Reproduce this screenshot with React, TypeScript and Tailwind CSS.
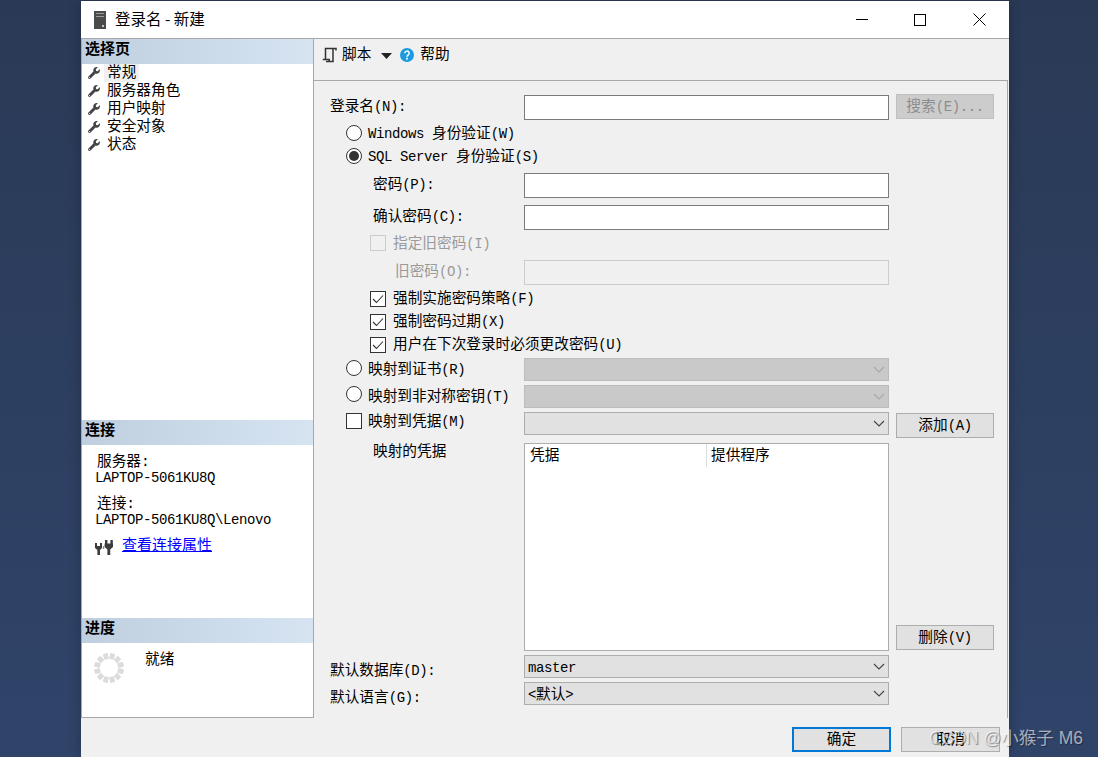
import type { ReactNode } from 'react'
import { FaWrench } from 'react-icons/fa'

// latin runs sit in a narrower span so they come out 8px per character
function Txt({ s }: { s: string }) {
  const parts = s.split(/([\x20-\x7e]+)/).filter(Boolean)
  return (
    <>
      {parts.map((p, i) =>
        /^[\x20-\x7e]+$/.test(p) ? (
          <span key={i} className="whitespace-pre text-[14px] tracking-[-0.4px]">
            {p}
          </span>
        ) : (
          <span key={i}>{p}</span>
        ),
      )}
    </>
  )
}

function SectionHeader({ title }: { title: string }) {
  return (
    <div className="flex h-[25px] shrink-0 items-center bg-gradient-to-r from-[#bfcfdf] to-[#d6e4f2] pb-px pl-[3px] text-[15px] font-bold leading-[18px] text-black">
      {title}
    </div>
  )
}

function Radio({ checked, className = '' }: { checked?: boolean; className?: string }) {
  return (
    <span className={`flex h-4 w-4 shrink-0 items-center justify-center rounded-full border border-[#333] bg-white ${className}`}>
      {checked && <span className="h-[10px] w-[10px] rounded-full bg-[#333]" />}
    </span>
  )
}

function Checkbox({ checked, disabled }: { checked?: boolean; disabled?: boolean }) {
  return (
    <span
      className={`flex h-4 w-4 shrink-0 items-center justify-center border ${
        disabled ? 'border-[#ccc] bg-[#f0f0f0]' : 'border-[#333] bg-white'
      }`}
    >
      {checked && (
        <svg width="12" height="10" viewBox="0 0 12 10" fill="none" stroke="#333" strokeWidth="1.1">
          <path d="M1 5l3.5 3.5L11 1.5" />
        </svg>
      )}
    </span>
  )
}

function Chevron({ disabled }: { disabled?: boolean }) {
  return (
    <svg width="12" height="7" viewBox="0 0 12 7" fill="none" stroke={disabled ? '#a8a8a8' : '#444'} strokeWidth="1.1">
      <path d="M1 1l5 5 5-5" />
    </svg>
  )
}

function Combo({ value, disabled }: { value?: string; disabled?: boolean }) {
  return (
    <div
      className={`flex h-[23px] w-[365px] items-center justify-between border pl-[3px] pr-[3px] ${
        disabled ? 'border-[#bcbcbc] bg-[#c9c9c9]' : 'border-[#adadad] bg-[#e1e1e1]'
      }`}
    >
      <span className="pt-[2px] leading-[18px]">{value && <Txt s={value} />}</span>
      <Chevron disabled={disabled} />
    </div>
  )
}

function TextInput({ disabled }: { disabled?: boolean }) {
  return (
    <div
      className={`h-[25px] w-[365px] border ${
        disabled ? 'border-[#cccccc] bg-[#f0f0f0]' : 'border-[#7a7a7a] bg-white'
      }`}
    />
  )
}

function Button({ label, disabled }: { label: string; disabled?: boolean }) {
  return (
    <div
      className={`ml-[7px] flex h-[25px] w-[98px] items-center justify-center border pt-px leading-[18px] ${
        disabled ? 'border-[#bfbfbf] bg-[#cccccc] text-[#8c8c8c]' : 'border-[#adadad] bg-[#e1e1e1]'
      }`}
    >
      <Txt s={label} />
    </div>
  )
}

// one row of the form: left cell up to x=524, then the field and optional button
function Row({ left, children, className = '' }: { left: ReactNode; children?: ReactNode; className?: string }) {
  return (
    <div className={`flex items-center ${className}`}>
      <div className="flex w-[194px] shrink-0 items-center leading-[18px]">{left}</div>
      {children}
    </div>
  )
}

function ServerIcon() {
  return (
    <svg width="14" height="18" viewBox="0 0 14 18">
      <rect x="1" y="0" width="12" height="18" fill="#4a4a4a" />
      <rect x="3" y="2" width="8" height="1" fill="#9a9a9a" />
      <rect x="3" y="5" width="8" height="1" fill="#9a9a9a" />
      <rect x="9" y="14" width="2" height="2" fill="#c8c8c8" />
    </svg>
  )
}

function ScriptIcon() {
  return (
    <svg width="15" height="16" viewBox="0 0 15 16" fill="none" stroke="#333" strokeWidth="1.5">
      <path d="M14 3.5V1.5H3.5V12.5" />
      <path d="M11 1.5V14.5H4" />
      <path d="M.8 12.5H7.2V14.5" />
    </svg>
  )
}

function PlugsIcon() {
  return (
    <svg width="18" height="15" viewBox="0 0 18 15" fill="#3c3c3c">
      <rect x="0" y="3" width="2" height="4" />
      <rect x="5" y="3" width="2" height="4" />
      <path d="M0 6h7v2L5 10v5H2.4v-5L0 8z" />
      <rect x="10" y="0" width="2.4" height="4" />
      <rect x="15.4" y="0" width="2.4" height="4" />
      <path d="M9.6 3.5h8.4v3.5l-2.8 2.5V15h-2.8V9.5L9.6 7z" />
      <rect x="7.8" y="6" width="1.4" height="3" fill="#8a8a8a" />
    </svg>
  )
}

function Spinner() {
  const dots = Array.from({ length: 12 }, (_, i) => i * 30 + 15)
  return (
    <svg width="32" height="32" viewBox="0 0 32 32">
      {dots.map((a) => (
        <rect key={a} x="13.5" y="1" width="5" height="6" rx="1" fill="#dcdcdc" transform={`rotate(${a} 16 16)`} />
      ))}
    </svg>
  )
}

const pages = ['常规', '服务器角色', '用户映射', '安全对象', '状态']

export default function App() {
  return (
    <div className="relative h-[757px] w-[1098px] overflow-hidden bg-gradient-to-b from-[#2a3a56] to-[#30446a] pl-[81px] pt-px font-['Liberation_Mono','Noto_Sans_CJK_SC',monospace] text-[14.67px] text-black">
      <div className="flex h-[756px] w-[928px] flex-col bg-[#f0f0f0] shadow-[0_0_12px_rgba(0,0,0,0.25)]">
        {/* title bar */}
        <div className="flex h-[38px] shrink-0 items-center border-b border-[#a8a8a8] bg-white pl-[12px] pr-px">
          <ServerIcon />
          <span className="ml-[8px] -translate-y-px font-['Noto_Sans_CJK_SC',sans-serif] text-[15.5px]">登录名 - 新建</span>
          <div className="ml-auto flex">
            <div className="flex h-[36px] w-[58px] items-center justify-center pr-[2px]">
              <span className="h-px w-3 bg-black" />
            </div>
            <div className="flex h-[36px] w-[58px] items-center justify-center pr-[2px]">
              <span className="h-[12px] w-[12px] border border-black" />
            </div>
            <div className="flex h-[36px] w-[58px] items-center justify-center">
              <svg width="13" height="13" viewBox="0 0 13 13" stroke="#000" strokeWidth="1">
                <path d="M.5.5l12 12M12.5.5l-12 12" />
              </svg>
            </div>
          </div>
        </div>

        <div className="flex min-h-0 flex-1">
          {/* left column */}
          <div className="h-[679px] w-[233px] shrink-0 border-x border-b border-[#a8a8a8] bg-white">
            <SectionHeader title="选择页" />
            <div className="h-[356px]">
              {pages.map((p, i) => (
                <div key={p} className="flex h-[18px] items-center pl-[6px] leading-[18px]">
                  <FaWrench className="h-3 w-3 text-[#444]" />
                  <span className={`ml-[4px] px-[3px] ${i === 0 ? 'bg-[#f0f0f0]' : ''}`}>{p}</span>
                </div>
              ))}
            </div>

            <SectionHeader title="连接" />
            <div className="h-[173px] pl-[13px] pt-[9px] leading-[18px]">
              <div className="h-[15px] -translate-y-px pl-[2px]">服务器:</div>
              <div className="h-[17px]">
                <Txt s="LAPTOP-5061KU8Q" />
              </div>
              <div className="mt-[10px] h-[15px] -translate-y-px pl-[2px]">连接:</div>
              <div className="h-[17px]">
                <Txt s="LAPTOP-5061KU8Q\Lenovo" />
              </div>
              <div className="mt-[10px] flex items-center">
                <PlugsIcon />
                <a className="ml-[9px] text-[15px] text-[#0000ff] underline">查看连接属性</a>
              </div>
            </div>

            <SectionHeader title="进度" />
            <div className="flex pl-[11px] pt-[9px]">
              <Spinner />
              <span className="ml-[20px] -mt-px leading-[18px]">就绪</span>
            </div>
          </div>

          {/* right column */}
          <div className="flex min-w-0 flex-1 flex-col">
            <div className="flex h-[41px] shrink-0 items-start pl-[8px] pt-[8px] leading-[18px]">
              <ScriptIcon />
              <span className="ml-[5px] -translate-y-px">脚本</span>
              <svg className="ml-[10px] mt-[6px]" width="11" height="6" viewBox="0 0 11 6" fill="#222">
                <path d="M0 0h11L5.5 6z" />
              </svg>
              <svg className="ml-[8px] mt-px" width="14" height="14" viewBox="0 0 14 14">
                <circle cx="7" cy="7" r="7" fill="#1c9ae0" />
                <path d="M4.8 5.3a2.2 2.2 0 1 1 3.3 1.9c-.8.5-1.1.8-1.1 1.6" fill="none" stroke="#fff" strokeWidth="1.5" />
                <rect x="6.1" y="9.8" width="1.8" height="1.8" fill="#fff" />
              </svg>
              <span className="ml-[6px] -translate-y-px">帮助</span>
            </div>

            {/* form */}
            <div className="mr-[1px] h-[638px] border-r border-t border-[#a8a8a8] pl-[16px] pt-[13px]">
              <Row left={<Txt s="登录名(N):" />} className="h-[26px]">
                <div className="mt-px">
                  <TextInput />
                </div>
                <div className="-mt-px">
                  <Button label="搜索(E)..." disabled />
                </div>
              </Row>
              <div className="mt-[2px]" />
              <Row
                className="h-[23px]"
                left={
                  <span className="flex items-center pl-4">
                    <Radio className="-translate-y-px" />
                    <span className="ml-[6px]">
                      <Txt s="Windows 身份验证(W)" />
                    </span>
                  </span>
                }
              />
              <Row
                className="h-[23px]"
                left={
                  <span className="flex items-center whitespace-nowrap pl-4">
                    <Radio checked className="-translate-y-px" />
                    <span className="ml-[6px]">
                      <Txt s="SQL Server 身份验证(S)" />
                    </span>
                  </span>
                }
              />
              <Row className="mt-[5px] h-[25px]" left={<span className="-translate-y-px pl-[43px]"><Txt s="密码(P):" /></span>}>
                <TextInput />
              </Row>
              <Row className="mt-[7px] h-[25px]" left={<span className="-translate-y-px pl-[43px]"><Txt s="确认密码(C):" /></span>}>
                <TextInput />
              </Row>
              <Row
                className="mt-[2px] h-[22px]"
                left={
                  <span className="flex items-center pl-[40px] text-[#9a9a9a]">
                    <Checkbox disabled />
                    <span className="ml-[7px] translate-y-px">
                      <Txt s="指定旧密码(I)" />
                    </span>
                  </span>
                }
              />
              <Row className="mt-[6px] h-[25px]" left={<span className="-translate-y-px pl-[65px] text-[#9a9a9a]"><Txt s="旧密码(O):" /></span>}>
                <TextInput disabled />
              </Row>
              <div className="mt-[2px]">
                {['强制实施密码策略(F)', '强制密码过期(X)', '用户在下次登录时必须更改密码(U)'].map((t) => (
                  <Row
                    key={t}
                    className="h-[23px]"
                    left={
                      <span className="flex items-center whitespace-nowrap pl-[40px]">
                        <Checkbox checked />
                        <span className="ml-[7px]">
                          <Txt s={t} />
                        </span>
                      </span>
                    }
                  />
                ))}
              </div>
              <Row
                className="mt-[2px] h-[23px]"
                left={
                  <span className="flex items-center pl-4">
                    <Radio className="-translate-y-[2px]" />
                    <span className="ml-[6px]">
                      <Txt s="映射到证书(R)" />
                    </span>
                  </span>
                }
              >
                <Combo disabled />
              </Row>
              <Row
                className="mt-[4px] h-[23px]"
                left={
                  <span className="flex items-center pl-4">
                    <Radio className="-translate-y-[3px]" />
                    <span className="ml-[6px]">
                      <Txt s="映射到非对称密钥(T)" />
                    </span>
                  </span>
                }
              >
                <Combo disabled />
              </Row>
              <Row
                className="mt-[4px] h-[23px] !items-start"
                left={
                  <span className="flex h-[18px] items-center pl-4">
                    <Checkbox />
                    <span className="ml-[6px] translate-y-px">
                      <Txt s="映射到凭据(M)" />
                    </span>
                  </span>
                }
              >
                <Combo />
                <div className="mt-px">
                  <Button label="添加(A)" />
                </div>
              </Row>
              <Row
                className="mt-[8px] h-[208px] !items-start"
                left={<span className="pl-[43px]">映射的凭据</span>}
              >
                <div className="flex h-[208px] w-[365px] items-start border border-[#adadad] bg-white leading-[18px]">
                  <div className="h-[23px] w-[182px] border-r border-[#dcdcdc] pl-[5px] pt-[3px]">凭据</div>
                  <div className="pl-[4px] pt-[3px]">提供程序</div>
                </div>
                <div className="mb-px self-end">
                  <Button label="删除(V)" />
                </div>
              </Row>
              <Row className="mt-[4px] h-[23px]" left={<span className="pt-[9px]"><Txt s="默认数据库(D):" /></span>}>
                <Combo value="master" />
              </Row>
              <Row className="mt-[4px] h-[23px]" left={<span className="pt-[8px]"><Txt s="默认语言(G):" /></span>}>
                <Combo value="<默认>" />
              </Row>
            </div>

            {/* bottom buttons */}
            <div className="flex items-start pl-[478px] pt-[9px]">
              <div className="flex h-[25px] w-[99px] items-center justify-center border-2 border-[#0078d7] bg-[#e1e1e1] leading-[18px]">
                确定
              </div>
              <div className="ml-[10px] flex h-[25px] w-[99px] items-center justify-center border border-[#adadad] bg-[#e1e1e1] leading-[18px]">
                取消
              </div>
            </div>
          </div>
        </div>
      </div>

      <span className="absolute right-[15px] top-[727px] font-['Liberation_Sans','Noto_Sans_CJK_SC',sans-serif] text-[17.5px] leading-[22px] text-white/60 [text-shadow:1px_1px_1px_rgba(0,0,0,0.4)]">
        CSDN @小猴子 M6
      </span>
    </div>
  )
}
